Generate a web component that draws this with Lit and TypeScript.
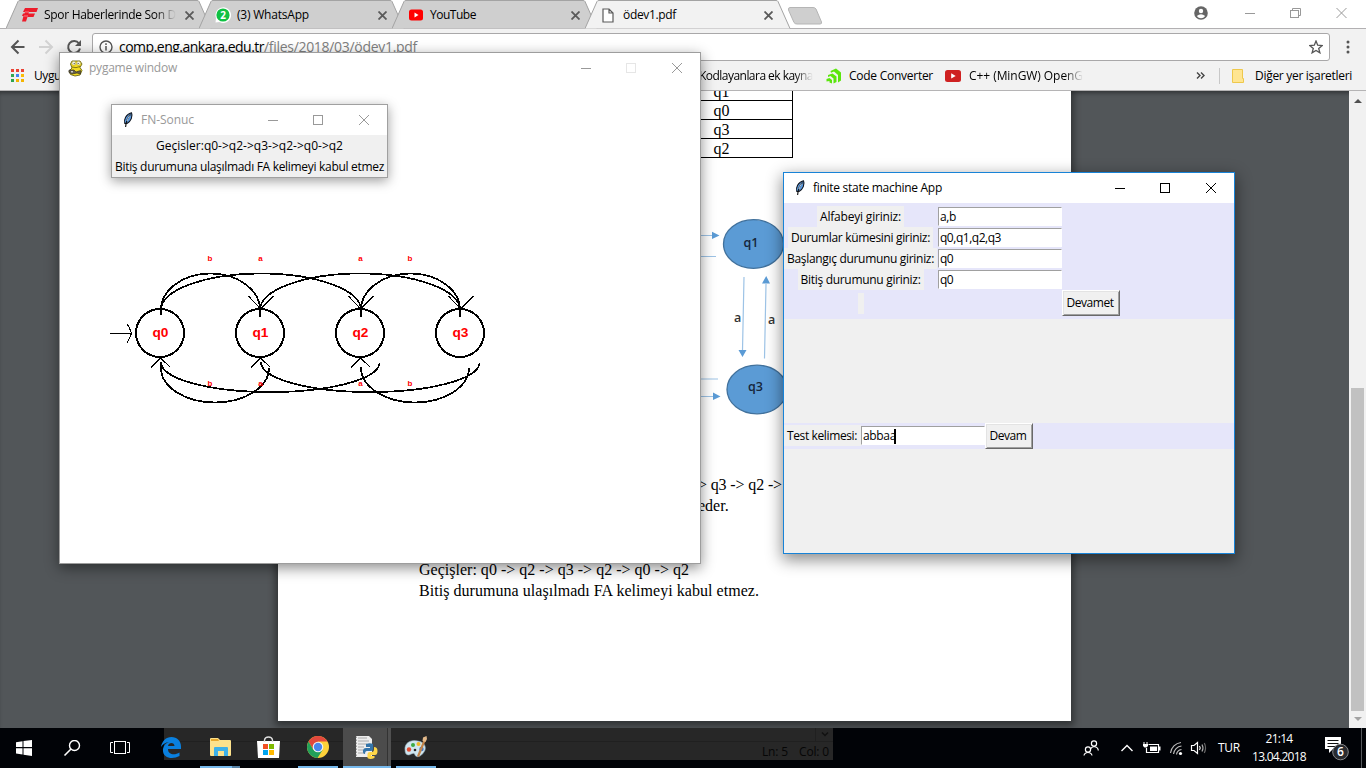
import { LitElement, html, css, svg } from "lit";
import { customElement, property } from "lit/decorators.js";

/* A run of text whose tracking is tuned so that it fills a given width. */
@customElement("fit-text")
class FitText extends LitElement {
  @property({ type: Number }) w = 0;
  static styles = css`
    :host { display: inline-block; white-space: pre; flex: none; }
  `;
  render() { return html`<slot></slot>`; }
  firstUpdated() {
    const n = (this.textContent || "").length;
    const natural = this.getBoundingClientRect().width;
    if (this.w && n) this.style.letterSpacing = `${(this.w - natural) / n}px`;
  }
}

const x10 = svg`<path d="M.5 .5l8 8M8.500 .5l-8 8" stroke="#5a5a5a" stroke-width="1.800" fill="none"/>`;

const feather = html`<svg width="12" height="16" viewBox="0 0 12 16">
  <path d="M2.800 11.500C1.500 8 4 2 9.500 .8C11 4 9 9.500 5 11.500Z" fill="#5b9be0" stroke="#10151f" stroke-width="1.100"/>
  <path d="M8.500 2.500C6 5 4 9 3.600 15" fill="none" stroke="#111" stroke-width="1.100"/>
  <path d="M7.800 3.500C6 6 5.500 7 5 9" fill="none" stroke="#d4e8ff" stroke-width=".9"/></svg>`;

const snake = html`<svg width="16" height="17" viewBox="0 0 16 17">
  <path d="M4 1H12L14 4L12 7.500L14 10.500L12 15L7 16L2.500 14.500L1 11L4 8L2.500 4Z" fill="#f2db22" stroke="#6b6415" stroke-width=".9"/>
  <circle cx="5.800" cy="3.200" r="1.900" fill="#f4f4e4" stroke="#8f8938" stroke-width=".4"/><circle cx="10.600" cy="3.200" r="1.900" fill="#f4f4e4" stroke="#8f8938" stroke-width=".4"/>
  <circle cx="6.200" cy="3.500" r=".6" fill="#333"/><circle cx="10.200" cy="3.500" r=".6" fill="#333"/>
  <path d="M4 7Q8 8.500 12 6.500" stroke="#857811" fill="none"/>
  <path d="M1 10H6L8 12L12.500 10.500V14L9 13L4 14L1 12.500Z" fill="#66604d" stroke="#29261b" stroke-width=".6"/>
  <path d="M3 11h2v1.500H3z" fill="#ccc"/></svg>`;

const controls = (c: string, mid: string) => html`<svg class="ctl" width="102" height="12" viewBox="0 0 102 12" fill="none" shape-rendering="crispEdges">
  <path d="M0 6.500H10" stroke=${c}/><rect x="45.500" y="1.500" width="9" height="9" stroke=${mid}/>
  <path d="M91 1L101 11M101 1L91 11" stroke=${c} shape-rendering="auto"/></svg>`;

const tabs = [
  { title: "Spor Haberlerinde Son D", w: 132, fade: true, icon: html`<svg width="16" height="14" viewBox="0 0 16 14"><path d="M3 0H16L14.500 4H7L6.500 5.500H13L11.500 9H5.500L4 13.500H0L1.500 8H0L1 5.500H2.500L3 4H1Z" fill="#ed1c2b"/><path d="M3 4H7M2 8H6" stroke="#ffc0c0" stroke-width=".6"/></svg>` },
  { title: "(3) WhatsApp", w: 72, icon: html`<svg width="16" height="16" viewBox="0 0 16 16"><path d="M.5 15.500L1 11A7.800 7.800 0 1 1 4.500 15Z" fill="#fff"/><circle cx="8" cy="8" r="6.600" fill="#0fc143"/><text x="8" y="11.500" font-size="10" font-weight="700" fill="#fff" text-anchor="middle">2</text></svg>` },
  { title: "YouTube", w: 46, icon: html`<svg width="16" height="14" viewBox="0 0 16 14"><rect x="1" y="1.500" width="14" height="11" rx="2.500" fill="#f00"/><path d="M6.500 4.500V9.500L10.500 7Z" fill="#fff"/></svg>` },
  { title: "ödev1.pdf", w: 53, active: true, icon: html`<svg width="12" height="15" viewBox="0 0 12 15"><path d="M1 1H7L11 5V14H1ZM7 1V5H11" fill="#fff" stroke="#5a5a5a" stroke-width="1.200"/></svg>` },
];

/* Upper transition arc between two states. */
const top = (x1: number, x2: number) =>
  `M${x1} 315V310A${(x2 - x1) / 2} 36.500 0 0 1 ${x2} 310V317`;

const edge = html`<svg width="20" height="21" viewBox="0 0 20 21"><path d="M0 10C1 4 5 0 10.500 0S20 4 20 9.500V12H7C7 18 14 18.500 18.500 15.500V19C11 23 1 21 2 12C2.500 8.500 5 6 8 5C4.500 5.500 2 7 0 10ZM7 9H13.500C13.500 5 7.500 5 7 9Z" fill="#0a80df" fill-rule="evenodd"/></svg>`;
const explorer = html`<svg width="21" height="19" viewBox="0 0 21 19"><path d="M0 1Q0 0 1 0H8L10 2H20Q21 2 21 3V17Q21 18 20 18H1Q0 18 0 17Z" fill="#fde28c"/><path d="M1 1H8L9 3H1Z" fill="#e8a92e"/><path d="M4 10Q4 9 5 9H17Q18 9 18 10V18H14V13H8V18H4Z" fill="#3fb1e8"/></svg>`;
const store = html`<svg width="23" height="22" viewBox="0 0 23 22"><path d="M0 5H23L22 22H1Z" fill="#fff"/><path d="M7.500 6V4Q8 1 11.500 1T15.500 4V6" fill="none" stroke="#ddd" stroke-width="1.400"/><path d="M6 8H11V13H6Z" fill="#f25022"/><path d="M12 8H17V13H12Z" fill="#7fba00"/><path d="M6 14H11V19H6Z" fill="#00a4ef"/><path d="M12 14H17V19H12Z" fill="#ffb900"/></svg>`;
const chrome = html`<svg width="22" height="22" viewBox="0 0 22 22"><circle cx="11" cy="11" r="11" fill="#fdd13a"/><path d="M11 5.500H20.500A11 11 0 0 0 1.500 5.500L6.300 13.800Z" fill="#e2483d"/><path d="M1.500 5.500A11 11 0 0 0 10.500 22L15.700 13.800L11 16L6.300 13.800Z" fill="#22a05a"/><circle cx="11" cy="11" r="5.300" fill="#f4f4f4"/><circle cx="11" cy="11" r="4.200" fill="#4a86ee"/></svg>`;
const python = html`<svg width="24" height="23" viewBox="0 0 24 23"><path d="M1 0H14L17 3V21H1Z" fill="#eee"/><path d="M3 2H12M3 5H14M3 8H12M3 11H9M3 14H8M3 17H9" stroke="#aaa"/><path d="M1 .5V21" stroke="#555" stroke-dasharray="1.500 1.500"/><path d="M11 8Q15 6.500 18 8V13Q18 15 16 15H12Q10 15 10 18Q7.500 18 8 14Q8.500 12 11 12H15V11H11Z" fill="#3675a9"/><path d="M19 11Q22.500 11 22.500 15T20 19H16V20H19.500V22Q15 24 12.500 22V18Q12.500 16 15 16H17Q19 16 19 13Z" fill="#ffd748"/></svg>`;
const paint = html`<svg width="24" height="22" viewBox="0 0 24 22"><path d="M1 14C0 7 7 3 14 5C21 6 23 12 20 16C17 21 12 22 11 19C10 16 8 18 5 19C2 19 1 17 1 14Z" fill="#cfe5ef" stroke="#8ba4b1" stroke-width=".6"/><circle cx="5" cy="13.500" r="2.200" fill="#e14c32"/><circle cx="9" cy="9" r="2" fill="#3aaa45"/><circle cx="14.500" cy="8" r="2" fill="#f0b72a"/><circle cx="17.500" cy="13" r="2.200" fill="#3f75c4"/><circle cx="11" cy="14" r="1.300" fill="#272727"/><path d="M13 20L19.500 4L21.500 5L15 21Z" fill="#c38449"/><path d="M18.500 5L19 1.500L22.500 0L23 3L21.500 6Z" fill="#e3b98a"/></svg>`;

@customElement("app-root")
class AppRoot extends LitElement {
  static styles = css`
    :host { display: block; width: 1366px; height: 768px; overflow: hidden; position: relative;
      font: 12px/16px "Open Sans", "Noto Sans", sans-serif; color: #000; }
    * { box-sizing: border-box; }
    svg { display: block; flex: none; }
    svg text { font-family: inherit; }
    .screen { display: flex; flex-direction: column; height: 768px; }
    .strip { height: 29px; display: flex; background: #fff; padding-left: 6px; border-bottom: 1px solid #b2b0b2; flex: none; }
    .tab { width: 206px; margin-right: -13px; height: 29px; display: grid; flex: none; }
    .tab > * { grid-area: 1 / 1; }
    .tab.active { z-index: 1; }
    .tabrow { display: flex; align-items: center; padding: 1px 18px 0 15px; height: 29px; }
    .tabicon { width: 20px; margin-right: 3px; display: flex; padding-left: 1px; }
    .tabicon.doc { padding-left: 2px; }
    .fade { -webkit-mask-image: linear-gradient(90deg, #000 84%, transparent); }
    .grow { flex: 1; }
    .newtab { margin: 7px 0 0 9px; }
    .profile { margin: 6px 37px 0 0; }
    .strip > .ctl { margin: 7px 19px 0 0; }
    .tools { height: 32px; background: #f2f2f2; display: flex; align-items: center; flex: none; padding: 4px 15px 0 10px; }
    .nav { margin-right: 10px; }
    .omni { height: 28px; width: 1238px; border: 1px solid #a9a8a9; border-radius: 3px; background: #fff; display: flex; align-items: center; padding: 0 6px; font-size: 14px; }
    .omni .info { margin-right: 6px; }
    .path { color: #808080; }
    .more { margin-left: 16px; }
    .marks { height: 30px; background: #f2f2f2; border-bottom: 1px solid #b5b4b5; flex: none; display: flex; align-items: center; padding: 0 14px 0 11px; }
    .apps { margin-right: 9px; }
    .uygu { width: 665px; flex: none; }
    .marks .code { margin: 0 7px 0 13px; }
    .marks .yt { margin: 0 8px 0 12px; }
    .marks .chev { margin-right: 11px; }
    .sep { width: 1px; height: 16px; background: #c8c8c8; margin: 0 12px 0 3px; }
    .folder { margin-right: 11px; }
    .viewer { flex: 1; min-height: 0; background: #525659; display: flex; justify-content: flex-end; overflow: hidden; box-shadow: inset 0 4px 4px -2px rgba(0,0,0,.4); }
    .page { width: 793px; height: 630px; background: #fff; box-shadow: 0 2px 7px 3px rgba(0,0,0,.4); margin-right: 278px; overflow: hidden;
      font: 16px/21px "Liberation Serif", serif; display: flex; flex-direction: column; }
    .table { margin: -10px 0 0 372px; width: 143px; border: 1px solid #000; border-top: 0; }
    .cell { height: 19px; line-height: 19px; border-top: 1px solid #000; text-align: center; }
    .figure { margin: 32px 0 0 412px; }
    .lines { margin: 54px 0 0 141px; }
    .lines > div { height: 21px; }
    .lines .late { padding-left: 279px; }
    .lines .gap { height: 43px; }
    .scroll { width: 17px; background: #f1f1f1; display: flex; flex-direction: column; align-items: center; }
    .thumb { width: 13px; height: 323px; margin-top: 285px; background: #c1c1c1; }
    .scroll .up { margin-top: 8px; }
    .scroll .down { margin-top: 6px; }

    .win { position: absolute; background: #fff; display: flex; flex-direction: column; }
    .title { display: flex; align-items: center; flex: none; height: 30px; }
    .game { left: 59px; top: 52px; width: 642px; height: 512px; border: 1px solid #9d9d9d; box-shadow: 0 4px 13px rgba(0,0,0,.45); }
    .game > .title { padding: 0 17px 0 8px; color: #999; }
    .result { left: 111px; top: 104px; width: 277px; height: 74px; border: 1px solid #a0a0a0; box-shadow: 0 3px 11px rgba(0,0,0,.38); }
    .result > .title { padding: 0 17px 0 10px; color: #999; }
    .result .body { background: #f0f0f0; flex: 1; display: flex; flex-direction: column; align-items: center; }
    .result .body > div { height: 21px; line-height: 22px; }
    .icon { width: 21px; }
    .result .icon, .app .icon { width: 19px; }
    .app { left: 783px; top: 172px; width: 452px; height: 382px; border: 1px solid #1883d7; background: #f0f0f0; box-shadow: 0 5px 15px 1px rgba(0,0,0,.45); }
    .app > .title { background: #fff; padding: 0 17px 0 10px; }
    .form { background: #e6e6fa; padding: 3px 0; display: grid; grid-template-columns: 154px 124px 58px; grid-template-rows: repeat(4, 21px) 26px; flex: none; }
    .label { grid-column: 1; justify-self: center; background: #f0f0f0; height: 21px; line-height: 22px; padding: 0 3px; margin-right: 1px; white-space: nowrap; }
    .entry { grid-column: 2; width: 124px; height: 19px; margin: 1px 0; background: #fff; border: 1px solid #fff; border-top-color: #a0a0a0; border-left-color: #a0a0a0; padding: 1px 0 0 1px; display: flex; align-items: center; }
    .btn { height: 26px; background: #f0f0f0; border: 1px solid; border-color: #fff #696969 #696969 #fff; box-shadow: inset 1px 1px #e3e3e3, inset -1px -1px #a0a0a0; display: flex; align-items: center; justify-content: center; grid-column: 3; padding-right: 2px; }
    .stub { width: 6px; padding: 0; align-self: center; }
    .form > .btn { grid-row: 5; }
    .test { margin-top: 104px; height: 26px; background: #e6e6fa; display: flex; align-items: flex-start; flex: none; }
    .test .label { margin: 2px 0 0; width: 77px; }
    .test .entry { margin-top: 3px; }
    .test .btn { width: 48px; }
    .caret { width: 2px; height: 15px; background: #000; margin-left: -2px; }

    .taskbar { height: 40px; background: #010307; flex: none; display: flex; color: #fff; }
    .left { width: 147px; padding: 12px 0 0 16px; }
    .ghost { width: 686px; height: 40px; background: linear-gradient(#272727 13px, #202020 13px, #202020 14px, #272727 14px) 17px 0 / 669px 32px no-repeat; display: flex; color: #060606; }
    .task { height: 40px; width: 48px; display: flex; justify-content: center; align-items: center; flex: none; border-bottom: 2px solid transparent; }
    .task.run { width: 40px; border-bottom-color: #76b9ed; margin-left: 5px; }
    .task.files { margin-right: 4px; border-image: linear-gradient(90deg, #76b9ed 31px, #5783a7 31px) 2; }
    .task.chrome { margin-left: 6px; }
    .task.cur { width: 48px; background: linear-gradient(90deg, #4c4c4c 44px, #333 44px, #333 45px, #505050 45px); }
    .status { margin-left: auto; display: grid; grid-template-rows: 13px 19px; align-content: start; justify-items: end; }
    .corner { border-left: 1px solid #202020; width: 18px; height: 13px; padding: 3px 0 0 5px; }
    .counts { display: flex; gap: 11px; padding: 3px 4px 0 0; }
    .tray { flex: 1; display: flex; align-items: center; padding-left: 250px; }
    .lang { margin-left: 11px; }
    .clock { display: flex; flex-direction: column; align-items: center; margin: 0 18px 0 12px; line-height: 18px; padding-bottom: 1px; }
    .desk { width: 1px; height: 40px; background: #55585c; margin-left: auto; margin-right: 4px; }
  `;

  tab(t: any) {
    return html`<div class="tab ${t.active ? "active" : ""}">
      <svg width="206" height="29" viewBox="0 0 206 29"><path d="M0 28.500L12 1.500Q12.500 .5 14 .5H191Q192.500 .5 193 1.500L205 28.500" fill=${t.active ? "#f2f2f2" : "#cfcfcf"} stroke="#a3a3a3"/></svg>
      <div class="tabrow"><span class="tabicon ${t.active ? "doc" : ""}">${t.icon}</span>
      <fit-text class=${t.fade ? "fade" : ""} w=${t.w}>${t.title}</fit-text><span class="grow"></span>
      <svg width="9" height="9" viewBox="0 0 9 9">${x10}</svg></div></div>`;
  }

  diagram() {
    const xs = [160, 260, 360, 460];
    return html`<svg width="640" height="480" viewBox="60 83 640 480" fill="none" stroke="#000" font-family="Liberation Sans">
      ${xs.map((x, i) => svg`<circle cx=${x} cy="333" r="24" stroke-width="2" shape-rendering="crispEdges"/>
        <text x=${x - 7.5} y="337" font-size="13" font-weight="700" fill="#f00" stroke="none" textLength="16" lengthAdjust="spacingAndGlyphs">q${i}</text>`)}
      <g stroke-width="1.700" shape-rendering="crispEdges">
        <path d=${top(161, 260)}/><path d=${top(161, 361)}/><path d=${top(260, 460)}/><path d=${top(361, 460)}/>
        <path d="M161 362V368A54 34.500 0 0 0 269 368"/><path d="M161 362A109 29.500 0 0 0 379.500 363"/>
        <path d="M261 362A109 29.500 0 0 0 479.500 363"/><path d="M361 367A54 35 0 0 0 469 368"/>
        <path d="M161 306V315M260 308V317M361 308V315M460 308V317" stroke-width="2"/>
        ${[260, 360, 460].map(x => svg`<path stroke-width="1" d="M${x - 11.5} 296L${x + .5} 309L${x + 13.5} 296"/>`)}
        ${[160, 260, 360].map(x => svg`<path stroke-width="1" d="M${x - 9} 367.500L${x + .5} 358L${x + 10.5} 367.500"/>`)}
        <path stroke-width="1" d="M110 333.500H131M127 324L129.500 328L131.500 333.500L129.500 338L127 343"/>
      </g>
      <g font-size="8" font-weight="700" fill="#f00" stroke="none" text-anchor="middle">
        ${[261, 386].map(y => [["b", 210], ["a", 260.5], ["a", 360.5], ["b", 410]].map(([c, x]) => svg`<text x=${x} y=${y}>${c}</text>`))}
      </g></svg>`;
  }

  figure() {
    return html`<svg class="figure" width="110" height="230" viewBox="690 190 110 230">
      <g fill="#5b9bd5" stroke="#41719c" stroke-width="1.300"><ellipse cx="753.500" cy="244" rx="30" ry="24.300"/><ellipse cx="757" cy="389.500" rx="30" ry="24.300"/></g>
      <g stroke="#9dc3e6" stroke-width="1.200" fill="none"><path d="M690 235.500H713M690 256.500H716M744 277L742.500 350M766 284L764.500 358.500M690 379H718M690 396.500H714"/></g>
      <path d="M712 231.800L719.500 235.500L712 239ZM738.500 350H746.500L742.500 357ZM762 283.500H770L766.200 276ZM713 392.500L720.500 396.500L713 400Z" fill="#5b9bd5"/>
      <g font-family="Open Sans" font-size="12.500" font-weight="600" fill="#16263a"><text x="743.500" y="246.500" textLength="15" lengthAdjust="spacingAndGlyphs">q1</text><text x="748" y="391" textLength="15" lengthAdjust="spacingAndGlyphs">q3</text><text x="734" y="321.500" fill="#333">a</text><text x="768" y="323.500" fill="#333">a</text></g></svg>`;
  }

  render() {
    return html`<div class="screen">
      <div class="strip">
        ${tabs.map(t => this.tab(t))}
        <svg class="newtab" width="36" height="18" viewBox="0 0 36 18"><path d="M3 .5H26Q28 .5 29 2L34.500 15Q35 17 33 17H10Q8 17 7 15.500L1.500 3Q1 .5 3 .5Z" fill="#cfcfcf" stroke="#b5b5b5"/></svg>
        <span class="grow"></span>
        <svg class="profile" width="14" height="14" viewBox="0 0 14 14"><circle cx="7" cy="7" r="6.800" fill="#666"/><circle cx="7" cy="5" r="2.200" fill="#fff"/><path d="M2.800 10Q7 6.500 11.200 10Q9.500 12.300 7 12.300T2.800 10Z" fill="#fff"/></svg>
        <svg class="ctl" width="102" height="12" viewBox="0 0 102 12" fill="none" stroke="#999"><path d="M0 6.500H10M91.500 1L101.500 11M101.500 1L91.500 11M47.500 3.500V1.500H55.500V8.500H53.500"/><rect x="45.500" y="3.500" width="8" height="7"/></svg>
      </div>
      <div class="tools">
        <svg class="nav" width="72" height="20" viewBox="0 0 72 20" fill="none" stroke="#555" stroke-width="2"><path d="M14.500 10H2.500M8.500 3.500L2 10L8.500 16.500"/><path d="M29 10H41M35.500 3.500L42 10L35.500 16.500" stroke="#d2d2d2"/><path d="M69 6.500A6 6 0 1 0 70 11.500"/><path d="M71 3V9H65Z" fill="#555" stroke="none"/></svg>
        <div class="omni">
          <svg class="info" width="14" height="14" viewBox="0 0 14 14"><circle cx="7" cy="7" r="6" fill="none" stroke="#555" stroke-width="1.400"/><path d="M7 6V10.500M7 3.300V5" stroke="#555" stroke-width="1.500"/></svg>
          <fit-text w="145">comp.eng.ankara.edu.tr</fit-text><fit-text class="path" w="153">/files/2018/03/ödev1.pdf</fit-text>
          <span class="grow"></span>
          <svg width="14" height="14" viewBox="0 0 14 14"><path d="M7 1L8.700 5.200L13.200 5.500L9.700 8.400L10.900 12.800L7 10.400L3.100 12.800L4.300 8.400L.8 5.500L5.300 5.200Z" fill="none" stroke="#555" stroke-width="1.300"/></svg>
        </div>
        <svg class="more" width="4" height="14" viewBox="0 0 4 14" fill="#555"><circle cx="2" cy="2" r="1.500"/><circle cx="2" cy="7" r="1.500"/><circle cx="2" cy="12" r="1.500"/></svg>
      </div>
      <div class="marks">
        <svg class="apps" width="14" height="14" viewBox="0 0 14 14">${["#ea4335", "#ea4335", "#ea4335", "#34a853", "#4285f4", "#fbbc05", "#2ea44f", "#f4b400", "#f4b400"].map((c, i) => svg`<rect x=${(i % 3) * 5} y=${Math.floor(i / 3) * 5} width="3" height="3" fill=${c}/>`)}</svg>
        <span class="uygu"><fit-text w="66">Uygulamalar</fit-text></span>
        <fit-text class="fade" w="114">Kodlayanlara ek kayna</fit-text>
        <svg class="code" width="16" height="16" viewBox="0 0 16 16" fill="#5be60d"><path d="M4.500 3L10 .5L15 4.500V12.500L12 14.500V7L8 3.500L5 4.800Z"/><path d="M2 7L6.500 5.500L10.500 8.500V14L7.500 15.500V10.500L4.500 8L2 9Z"/><path d="M.5 11L3.500 10L6 12V15.500L3.500 14.500V13L.5 13.500Z"/></svg>
        <fit-text w="84">Code Converter</fit-text>
        <svg class="yt" width="16" height="12" viewBox="0 0 16 12"><rect width="16" height="12" rx="2.500" fill="#cf2121"/><path d="M6.200 3.300V8.500L10.700 6Z" fill="#fff"/></svg>
        <fit-text class="fade" w="114">C++ (MinGW) OpenG</fit-text>
        <span class="grow"></span>
        <svg class="chev" width="9" height="7" viewBox="0 0 9 7" fill="none" stroke="#444" stroke-width="1.400"><path d="M1 .5L4 3.500L1 6.500M5 .5L8 3.500L5 6.500"/></svg>
        <span class="sep"></span>
        <svg class="folder" width="12" height="14" viewBox="0 0 12 14"><path d="M.5 .5H10.500V9.500H11.500V13.500H.5Z" fill="#ffe591" stroke="#eec84c"/></svg>
        <fit-text w="97">Diğer yer işaretleri</fit-text>
      </div>
      <div class="viewer">
        <div class="page">
          <div class="table">${["q1", "q0", "q3", "q2"].map(q => html`<div class="cell">${q}</div>`)}</div>
          ${this.figure()}
          <div class="lines">
            <div class="late"><fit-text w="84">&gt; q3 -&gt; q2 -&gt;</fit-text></div>
            <div class="late">eder.</div>
            <div class="gap"></div>
            <div><fit-text w="270">Geçişler: q0 -&gt; q2 -&gt; q3 -&gt; q2 -&gt; q0 -&gt; q2</fit-text></div>
            <div><fit-text w="340">Bitiş durumuna ulaşılmadı FA kelimeyi kabul etmez.</fit-text></div>
          </div>
        </div>
        <div class="scroll">
          <svg class="up" width="8" height="4" viewBox="0 0 8 4"><path d="M0 4L4 0L8 4Z" fill="#505050"/></svg>
          <span class="thumb"></span>
          <svg class="down" width="8" height="4" viewBox="0 0 8 4"><path d="M0 0L4 4L8 0Z" fill="#a3a3a3"/></svg>
        </div>
      </div>
      ${this.taskbar()}
    </div>
    ${this.windows()}`;
  }

  taskbar() {
    return html`<div class="taskbar">
      <div class="left">
        <svg width="118" height="18" viewBox="16 740 118 18" fill="none" stroke="#fff"><path d="M16 742.200L22.500 741.200V747H16ZM23.500 741L32 740V747H23.500ZM16 748.200H22.500V754.500L16 753.500ZM23.500 748.200H32V756L23.500 754.700Z" fill="#fff" stroke="none"/>
        <circle cx="74.500" cy="745.500" r="5" stroke-width="1.400"/><path d="M71 749L64.500 755.500" stroke-width="1.600"/><rect x="114.500" y="741.500" width="11" height="12"/><path d="M113 742.500H110.500V752.500H113M127 742.500H129.500V752.500H127"/></svg>
      </div>
      <div class="ghost">
        <div class="task">${edge}</div>
        <div class="task run files">${explorer}</div>
        <div class="task">${store}</div>
        <div class="task run chrome">${chrome}</div>
        <div class="task run cur">${python}</div>
        <div class="task run">${paint}</div>
        <div class="status">
          <div class="corner"><svg width="8" height="7" viewBox="0 0 8 7" fill="none" stroke="#111" stroke-width="1.500"><path d="M1 1.500L4 4.500L7 1.500"/></svg></div>
          <div class="counts"><fit-text w="26">Ln: 5</fit-text><fit-text w="30">Col: 0</fit-text></div>
        </div>
      </div>
      <div class="tray">
        <svg width="124" height="24" viewBox="1083 736 124 24" fill="none" stroke="#fff" stroke-width="1.200">
          <circle cx="1094" cy="743.500" r="2.600"/><path d="M1094 746.500Q1098 747 1098.300 750.500M1094 746.500Q1091.500 747 1090.500 749"/>
          <circle cx="1088" cy="749.500" r="2.600"/><path d="M1084 755.500Q1084.500 752.500 1088 752.500T1092 755.500"/>
          <path d="M1121.500 751L1127 745.500L1132.500 751" stroke-width="1.400"/>
          <path d="M1148.500 744.500H1158.500V752.500H1146.500V748"/><path d="M1150 746.500H1157V751H1150ZM1159 746.500H1160.500V750.500H1159Z" fill="#fff" stroke="none"/><path d="M1144 742V744M1147 742V744" stroke-width="1"/><path d="M1143 744H1148V746L1146.500 747.500H1144.500L1143 746Z" fill="#fff" stroke="none"/>
          <g stroke="#bbb"><path d="M1170.500 753A12 12 0 0 1 1181 742.500M1173.500 754A9 9 0 0 1 1181.500 746M1176.500 754.500A6 6 0 0 1 1181.500 749.500"/></g><circle cx="1180.500" cy="753.500" r="1.600" fill="#fff" stroke="none"/>
          <path d="M1191.500 745.500H1194L1197.500 742.500V753.500L1194 750.500H1191.500Z"/><path d="M1199.500 746Q1201 748 1199.500 750"/><path d="M1202 744.500Q1204 748 1202 751.500" stroke="#aaa"/><path d="M1204.300 743Q1206.800 748 1204.300 753" stroke="#666"/>
        </svg>
        <fit-text class="lang" w="22">TUR</fit-text>
        <div class="clock"><fit-text w="27">21:14</fit-text><fit-text w="54">13.04.2018</fit-text></div>
        <svg width="26" height="26" viewBox="1324 738 26 26"><path d="M1325 740H1341V752H1333L1329 756V752H1325Z" fill="#fff"/><path d="M1327.500 743.500H1338.500M1327.500 746.500H1338.500M1327.500 749.500H1335" stroke="#111"/><circle cx="1340.500" cy="755" r="7.800" fill="#292b2f" stroke="#85878a"/><text x="1340.500" y="759.300" text-anchor="middle" font-size="12" font-weight="600" fill="#fff">6</text></svg>
        <span class="desk"></span>
      </div>
    </div>`;
  }

  windows() {
    return html`<div class="win game">
      <div class="title"><span class="icon">${snake}</span><fit-text w="88">pygame window</fit-text><span class="grow"></span>${controls("#999", "#e6e6e6")}</div>
      ${this.diagram()}
    </div>
    <div class="win result">
      <div class="title"><span class="icon">${feather}</span><fit-text w="53">FN-Sonuc</fit-text><span class="grow"></span>${controls("#999", "#999")}</div>
      <div class="body"><div><fit-text w="187">Geçisler:q0-&gt;q2-&gt;q3-&gt;q2-&gt;q0-&gt;q2</fit-text></div><div><fit-text w="269">Bitiş durumuna ulaşılmadı FA kelimeyi kabul etmez</fit-text></div></div>
    </div>
    <div class="win app">
      <div class="title"><span class="icon">${feather}</span><fit-text w="129">finite state machine App</fit-text><span class="grow"></span>${controls("#000", "#000")}</div>
      <div class="form">
        ${([["Alfabeyi giriniz:", 81, "a,b", 16], ["Durumlar kümesini giriniz:", 139, "q0,q1,q2,q3", 61], ["Başlangıç durumunu giriniz:", 147, "q0", 13], ["Bitiş durumunu giriniz:", 120, "q0", 13]] as any[])
          .map(([l, w, v, vw]) => html`<div class="label"><fit-text w=${w}>${l}</fit-text></div><div class="entry"><fit-text w=${vw}>${v}</fit-text></div>`)}
        <div class="label stub"></div><div class="btn"><fit-text w="47">Devamet</fit-text></div>
      </div>
      <div class="test"><div class="label"><fit-text w="70">Test kelimesi:</fit-text></div><div class="entry"><fit-text w="33">abbaa</fit-text><span class="caret"></span></div><div class="btn"><fit-text w="37">Devam</fit-text></div></div>
    </div>`;
  }
}
